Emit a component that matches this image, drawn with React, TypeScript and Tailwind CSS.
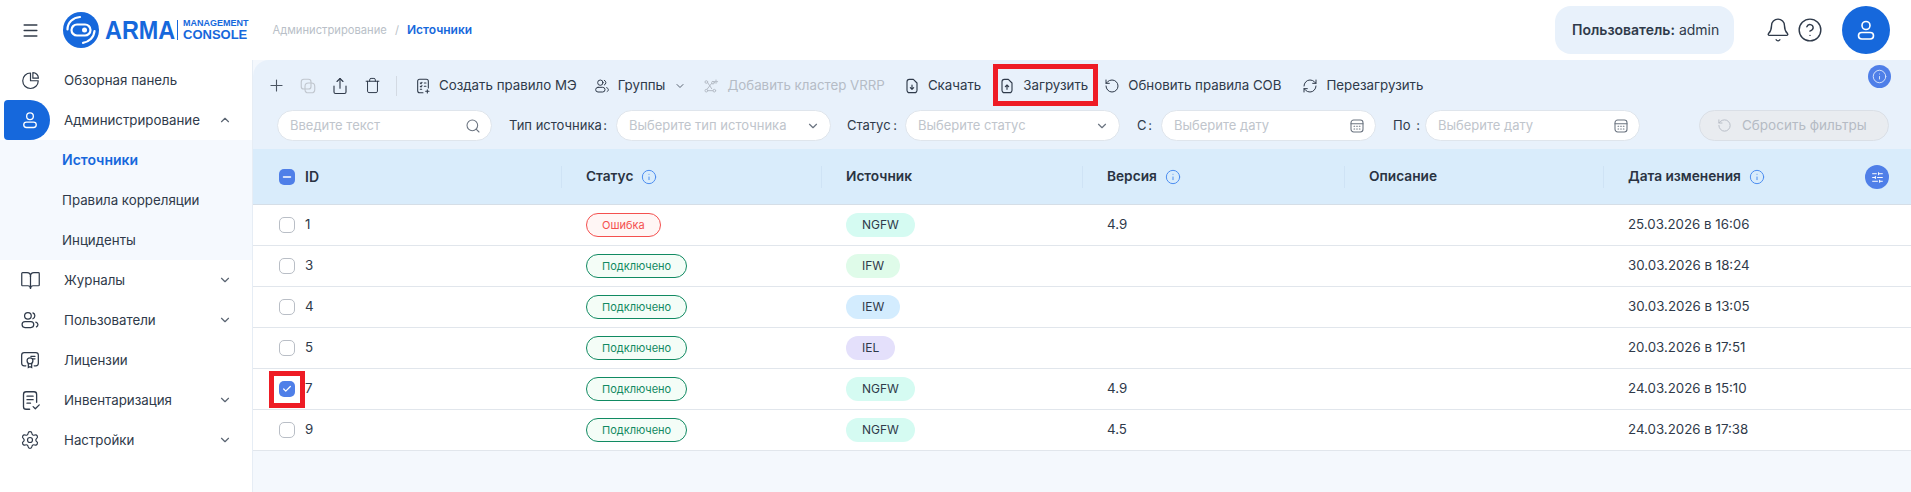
import React from "react";
import {
  BookOpen,
  Check,
  ChevronDown,
  ChevronUp,
  CircleHelp,
  Bell,
  Info,
  Menu,
  Minus,
  Plus,
  RefreshCw,
  RotateCcw,
  Search,
  Settings,
  Share,
  SlidersHorizontal,
  Trash,
} from "lucide-react";

const UserIcon = ({ className }: { className?: string }) => (
  <svg viewBox="0 0 24 24" fill="none" stroke="currentColor" strokeWidth="1.6" className={className}>
    <circle cx="12" cy="7.5" r="4" />
    <rect x="4.5" y="14.5" width="15" height="6.5" rx="3.25" />
  </svg>
);

const UsersIcon = ({ className }: { className?: string }) => (
  <svg viewBox="0 0 24 24" fill="none" stroke="currentColor" strokeWidth="1.5" strokeLinecap="round" className={className}>
    <circle cx="9.5" cy="7" r="4" />
    <rect x="2.5" y="14" width="14" height="7" rx="3.5" />
    <path d="M15.5 3.5a3.8 3.8 0 0 1 0 7M19 14.5c1.5.5 2.5 1.7 2.5 3s-.6 2.2-1.7 2.8" />
  </svg>
);

const PieIcon = ({ className }: { className?: string }) => (
  <svg viewBox="0 0 24 24" fill="none" stroke="currentColor" strokeWidth="1.5" strokeLinejoin="round" className={className}>
    <path d="M12 2.5a9.8 9.8 0 1 0 9.8 9.8H12z" />
    <path d="M15 2a7 7 0 0 1 7 7h-7z" />
  </svg>
);

const LicenseIcon = ({ className }: { className?: string }) => (
  <svg viewBox="0 0 24 24" fill="none" stroke="currentColor" strokeWidth="1.5" strokeLinecap="round" className={className}>
    <path d="M7 19H5a3 3 0 0 1-3-3V6a3 3 0 0 1 3-3h14a3 3 0 0 1 3 3v10a3 3 0 0 1-3 3h-2" />
    <path d="M13 7.5h5M15 10.5h3" />
    <circle cx="12" cy="13" r="3.5" />
    <path d="M10 16v5l2-1 2 1v-5" />
  </svg>
);

const InventoryIcon = ({ className }: { className?: string }) => (
  <svg viewBox="0 0 24 24" fill="none" stroke="currentColor" strokeWidth="1.5" strokeLinecap="round" strokeLinejoin="round" className={className}>
    <path d="M11 22H7a3 3 0 0 1-3-3V5a3 3 0 0 1 3-3h9a3 3 0 0 1 3 3v9" />
    <path d="M8 7h7M8 11h7M8 15h4" />
    <path d="m15 19 2.5 2.5L22 17" />
  </svg>
);

const CopyIcon = ({ className }: { className?: string }) => (
  <svg viewBox="0 0 24 24" fill="none" stroke="currentColor" strokeWidth="1.5" className={className}>
    <rect x="3" y="3" width="13" height="13" rx="3.5" />
    <rect x="8" y="8" width="13" height="13" rx="4.5" />
  </svg>
);

const RuleIcon = ({ className }: { className?: string }) => (
  <svg viewBox="0 0 24 24" fill="none" stroke="currentColor" strokeWidth="1.6" strokeLinecap="round" className={className}>
    <path d="M12 22H7a3 3 0 0 1-3-3V5a3 3 0 0 1 3-3h10a3 3 0 0 1 3 3v10" />
    <path d="M8 7.5l1 1 1.5-2M14 7.5h2.5M8 12.5l1 1 1.5-2M14 12.5h2.5M8 17h2" />
    <path d="M18.5 17.5v5M16 20h5" />
  </svg>
);

const ClusterIcon = ({ className }: { className?: string }) => (
  <svg viewBox="0 0 24 24" fill="none" stroke="currentColor" strokeWidth="1.5" strokeLinecap="round" className={className}>
    <circle cx="5" cy="6" r="2" />
    <circle cx="15" cy="7" r="2" />
    <circle cx="5" cy="19" r="2" />
    <circle cx="17" cy="19" r="2" />
    <path d="M7 7l6 9M13 8l-7 9M7 19h8M19.5 3v5M17 5.5h5" />
  </svg>
);

const FileArrowIcon = ({ up, className }: { up?: boolean; className?: string }) => (
  <svg viewBox="0 0 24 24" fill="none" stroke="currentColor" strokeWidth="1.7" strokeLinecap="round" strokeLinejoin="round" className={className}>
    <path d="M14 2H8a3.5 3.5 0 0 0-3.5 3.5v13A3.5 3.5 0 0 0 8 22h8a3.5 3.5 0 0 0 3.5-3.5V7.5z" />
    {up ? <path d="M12 17v-6.5M9.5 13 12 10.5 14.5 13" /> : <path d="M12 10.5V17M9.5 14.5 12 17l2.5-2.5" />}
  </svg>
);

const CalendarIcon = ({ className }: { className?: string }) => (
  <svg viewBox="0 0 24 24" fill="none" stroke="currentColor" strokeWidth="1.6" strokeLinecap="round" className={className}>
    <rect x="3" y="3" width="18" height="18" rx="4" />
    <path d="M3 8.5h18M7.5 12.5h1M11.5 12.5h1M15.5 12.5h1M7.5 16.5h1M11.5 16.5h1M15.5 16.5h1" />
  </svg>
);

const Logo = () => (
  <svg viewBox="0 0 36 36" className="w-9 h-9 shrink-0">
    <circle cx="18" cy="18" r="18" fill="#1668dc" />
    <path d="M4.5 17.5C4.5 10.5 10 5.5 17 5" fill="none" stroke="#fff" strokeWidth="2.2" strokeLinecap="round" />
    <path d="M31.5 19c-.5 6.5-5.5 11-11.5 11.8" fill="none" stroke="#fff" strokeWidth="2.2" strokeLinecap="round" />
    <rect x="8.5" y="12.5" width="19" height="11" rx="5.5" fill="none" stroke="#fff" strokeWidth="2.2" />
    <circle cx="21.5" cy="18" r="2.5" fill="#fff" />
  </svg>
);

const navItems = [
  { label: "Обзорная панель", icon: <PieIcon className="w-[19px] h-[19px]" /> },
  { label: "Администрирование", icon: <UserIcon className="w-5 h-5 text-white" />, active: true, open: true },
  { label: "Журналы", icon: <BookOpen className="w-[21px] h-[21px]" strokeWidth={1.4} />, arrow: true },
  { label: "Пользователи", icon: <UsersIcon className="w-5 h-5" />, arrow: true },
  { label: "Лицензии", icon: <LicenseIcon className="w-5 h-5" /> },
  { label: "Инвентаризация", icon: <InventoryIcon className="w-[21px] h-[21px]" />, arrow: true },
  { label: "Настройки", icon: <Settings className="w-5 h-5" strokeWidth={1.4} />, arrow: true },
];

const subItems = ["Источники", "Правила корреляции", "Инциденты"];

const columns = "grid grid-cols-[308px_260px_261px_262px_259px_1fr]";

const rows = [
  { id: "1", status: "Ошибка", source: "NGFW", version: "4.9", date: "25.03.2026 в 16:06" },
  { id: "3", status: "Подключено", source: "IFW", version: "", date: "30.03.2026 в 18:24" },
  { id: "4", status: "Подключено", source: "IEW", version: "", date: "30.03.2026 в 13:05" },
  { id: "5", status: "Подключено", source: "IEL", version: "", date: "20.03.2026 в 17:51" },
  { id: "7", status: "Подключено", source: "NGFW", version: "4.9", date: "24.03.2026 в 15:10", checked: true },
  { id: "9", status: "Подключено", source: "NGFW", version: "4.5", date: "24.03.2026 в 17:38" },
];

const sourceColors: Record<string, string> = {
  NGFW: "bg-[#d5fbf2]",
  IFW: "bg-[#dffbe9]",
  IEW: "bg-[#d3ecfe]",
  IEL: "bg-[#e4e0fb]",
};

const HeadCell = ({ title, info }: { title: string; info?: boolean }) => (
  <div className="flex items-center gap-2 h-[22px] pl-[24px] border-l border-[#cfe3f5] text-[13.7px] font-semibold text-[#2a3342]">
    {title}
    {info && <Info className="w-[16px] h-[16px] text-[#4d8ef0]" strokeWidth={1.5} />}
  </div>
);

const ToolButton = ({
  icon,
  label,
  className = "",
  disabled,
}: {
  icon: React.ReactNode;
  label: string;
  className?: string;
  disabled?: boolean;
}) => (
  <div className={`flex items-center gap-2 whitespace-nowrap ${disabled ? "text-[#b5bcc6]" : ""} ${className}`}>
    {icon}
    {label}
  </div>
);

const Field = ({ text, icon }: { text: string; icon: React.ReactNode }) => (
  <div className="flex items-center justify-between h-[31px] w-[215px] shrink-0 pl-3 pr-[10px] bg-white rounded-2xl border border-[#dfe5ec] text-[13px] text-[#c0c5cc]">
    {text}
    {icon}
  </div>
);

const Label = ({ text, className }: { text: string; className: string }) => (
  <span className={`flex justify-between shrink-0 whitespace-nowrap text-[13px] ${className}`}>
    {text}
    <span>:</span>
  </span>
);

export default function App() {
  return (
    <div className="flex flex-col w-[1911px] h-[492px] overflow-hidden bg-white font-['Inter',sans-serif] text-[13.3px] text-[#2f3a4a]">
      <header className="flex items-center h-[60px] shrink-0">
        <Menu className="ml-[21px] w-[19px] h-[19px] text-[#333c4a]" strokeWidth={1.8} />
        <div className="flex items-center ml-[23px] text-[#1668dc] font-['Liberation_Sans',sans-serif] font-bold">
          <Logo />
          <span className="ml-[6px] w-[71px] text-[26px] leading-[26px] origin-left scale-x-[0.9]">ARMA</span>
          <span className="ml-px mr-[5px] w-px h-[20px] bg-[#1668dc]" />
          <span className="flex flex-col">
            <span className="text-[9px] leading-[9px]">MANAGEMENT</span>
            <span className="text-[13px] leading-[12px] mt-px">CONSOLE</span>
          </span>
        </div>
        <div className="flex items-center ml-[24px] text-[11.2px]">
          <span className="text-[#b9bfc8]">Администрирование</span>
          <span className="mx-[8px] text-[#b9bfc8]">/</span>
          <span className="text-xs font-semibold text-[#1668dc]">Источники</span>
        </div>
        <div className="flex items-center ml-auto h-12 w-[179px] pl-[17px] rounded-2xl bg-[#e8f1fb] text-sm whitespace-nowrap">
          <span className="font-semibold mr-1">Пользователь:</span> admin
        </div>
        <Bell className="ml-[31px] w-[26px] h-[26px] mr-px text-[#2f3a4a]" strokeWidth={1.3} />
        <CircleHelp className="ml-[5px] w-[26px] h-[26px] text-[#2f3a4a]" strokeWidth={1.3} />
        <div className="flex items-center justify-center ml-[19px] mr-[21px] w-12 h-12 rounded-full bg-[#1668dc]">
          <UserIcon className="w-6 h-6 text-white" />
        </div>
      </header>

      <div className="flex flex-1 min-h-0">
        <aside className="w-[253px] shrink-0 border-r border-[#e6edf5]">
          {navItems.map((item) => (
            <React.Fragment key={item.label}>
              <div className="flex items-center h-10">
                <div className={`flex items-center justify-center ml-1 w-[46px] h-10 pl-[6px] ${item.active ? "bg-[#1668dc] rounded-l rounded-r-[20px]" : ""}`}>
                  {item.icon}
                </div>
                <span className="ml-[14px] pt-px">{item.label}</span>
                {item.open && <ChevronUp className="ml-auto mr-[20px] w-[14px] h-[14px] text-[#5a6472]" />}
                {item.arrow && <ChevronDown className="ml-auto mr-[20px] w-[14px] h-[14px] text-[#5a6472]" />}
              </div>
              {item.open && (
                <div className="bg-[#f5f9fe]">
                  {subItems.map((sub, i) => (
                    <div key={sub} className={`flex items-center h-10 pl-[62px] ${i === 0 ? "text-sm font-semibold text-[#1668dc]" : "pt-px"}`}>
                      {sub}
                    </div>
                  ))}
                </div>
              )}
            </React.Fragment>
          ))}
        </aside>

        <main className="relative flex-1 min-w-0 bg-[#f4f8fd]">
          <div className="h-[89px] bg-[#e8f1fb] rounded-tl-2xl pt-[9px]">
            <div className="flex items-center h-8 pl-[7px] pt-px">
              <div className="flex items-center justify-center w-8">
                <Plus className="w-[19px] h-[19px] text-[#4c5663]" strokeWidth={1.4} />
              </div>
              <div className="flex items-center justify-center w-8">
                <CopyIcon className="w-[18px] h-[18px] text-[#c0c6ce]" />
              </div>
              <div className="flex items-center justify-center w-8">
                <Share className="w-[18px] h-[18px]" strokeWidth={1.5} />
              </div>
              <div className="flex items-center justify-center w-8">
                <Trash className="w-[17px] h-[17px]" strokeWidth={1.4} />
              </div>
              <span className="ml-[8px] w-px h-5 bg-[#d3dae3]" />
              <ToolButton icon={<RuleIcon className="w-4 h-[18px]" />} label="Создать правило МЭ" className="ml-[18px]" />
              <ToolButton icon={<UsersIcon className="w-4 h-4" />} label="Группы" className="ml-[17px]" />
              <ChevronDown className="ml-[9px] w-3 h-3 text-[#5a6472]" />
              <ToolButton disabled icon={<ClusterIcon className="w-4 h-4" />} label="Добавить кластер VRRP" className="ml-[17px]" />
              <ToolButton icon={<FileArrowIcon className="w-4 h-4" />} label="Скачать" className="ml-[19px]" />
              <ToolButton icon={<FileArrowIcon up className="w-4 h-4" />} label="Загрузить" className="ml-[18px]" />
              <ToolButton icon={<RotateCcw className="w-4 h-4" strokeWidth={1.5} />} label="Обновить правила СОВ" className="ml-[16px]" />
              <ToolButton icon={<RefreshCw className="w-4 h-4" strokeWidth={1.5} />} label="Перезагрузить" className="ml-[21px]" />
            </div>

            <div className="flex items-center mt-[9px] pl-[24px]">
              <Field text="Введите текст" icon={<Search className="w-[16px] h-[16px] text-[#6b7480]" strokeWidth={1.6} />} />
              <Label text="Тип источника" className="ml-[17px] mr-[9px] w-[98px]" />
              <Field text="Выберите тип источника" icon={<ChevronDown className="w-[14px] h-[14px] text-[#6b7480]" />} />
              <Label text="Статус" className="ml-[16px] mr-[8px] w-[50px]" />
              <Field text="Выберите статус" icon={<ChevronDown className="w-[14px] h-[14px] text-[#6b7480]" />} />
              <Label text="С" className="ml-[17px] mr-[9px] w-[15px]" />
              <Field text="Выберите дату" icon={<CalendarIcon className="w-4 h-4 text-[#6b7480]" />} />
              <Label text="По" className="ml-[17px] mr-[5px] w-[27px]" />
              <Field text="Выберите дату" icon={<CalendarIcon className="w-4 h-4 text-[#6b7480]" />} />
              <div className="flex items-center gap-[10px] ml-[59px] w-[190px] h-[31px] pl-[17px] rounded-2xl border border-[#dadfe6] bg-[#e9ecf0] text-[13.5px] text-[#b5bbc4] whitespace-nowrap">
                <RotateCcw className="w-[15px] h-[15px]" strokeWidth={1.5} />
                Сбросить фильтры
              </div>
            </div>
          </div>

          <div className={`${columns} items-center h-[56px] bg-[#d9ecfb] border-b border-[#d5dee7]`}>
            <div className="flex items-center gap-[10px] pl-[26px] text-sm font-semibold text-[#2a3342]">
              <span className="flex items-center justify-center w-4 h-4 rounded-[5px] bg-[#4f7fe8]">
                <Minus className="w-3 h-3 text-white" strokeWidth={3} />
              </span>
              ID
            </div>
            <HeadCell title="Статус" info />
            <HeadCell title="Источник" />
            <HeadCell title="Версия" info />
            <HeadCell title="Описание" />
            <HeadCell title="Дата изменения" info />
          </div>

          {rows.map((row) => (
            <div key={row.id} className={`${columns} items-center h-[41px] bg-white border-b border-[#e1e6ec]`}>
              <div className="flex items-center gap-[10px] pl-[26px]">
                {row.checked ? (
                  <span className="flex items-center justify-center w-4 h-4 rounded-[5px] bg-[#4f7fe8]">
                    <Check className="w-[10px] h-[10px] text-white" strokeWidth={3} />
                  </span>
                ) : (
                  <span className="w-4 h-4 rounded-[5px] border border-[#b9bec6] bg-white" />
                )}
                {row.id}
              </div>
              <div className="pl-[25px]">
                <span className={`inline-flex items-center h-6 px-[15px] rounded-xl border text-[11px] ${row.status === "Ошибка" ? "border-[#f4504f] bg-[#fff6f5] text-[#f4504f]" : "border-[#118a62] bg-[#f4fdf7] text-[#118a62]"}`}>
                  {row.status}
                </span>
              </div>
              <div className="pl-[25px]">
                <span className={`inline-flex items-center h-6 px-4 rounded-xl text-xs ${sourceColors[row.source]}`}>
                  {row.source}
                </span>
              </div>
              <div className="pl-[25px]">{row.version}</div>
              <div />
              <div className="pl-[25px]">{row.date}</div>
            </div>
          ))}

          {/* annotations and floating round buttons */}
          <div className="absolute top-[5px] right-[20px] flex items-center justify-center w-[23px] h-[23px] rounded-full bg-[#4f7fe8]">
            <Info className="w-[15px] h-[15px] text-[#dbe6fb]" strokeWidth={1.5} />
          </div>
          <div className="absolute top-[105px] right-[22px] flex items-center justify-center w-6 h-6 rounded-full bg-[#4f7fe8]">
            <SlidersHorizontal className="w-[13px] h-[13px] text-white" strokeWidth={1.8} />
          </div>
          <div className="absolute top-[4px] left-[740px] w-[105px] h-[42px] border-[5px] border-[#ee1c25]" />
          <div className="absolute top-[311px] left-[16px] w-[36px] h-[37px] border-[5px] border-[#ee1c25]" />
        </main>
      </div>
    </div>
  );
}
